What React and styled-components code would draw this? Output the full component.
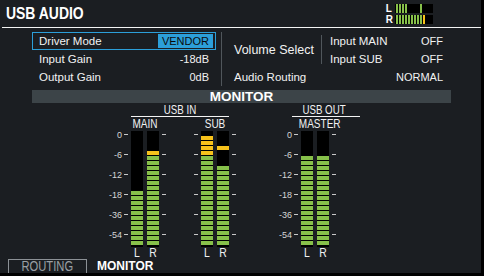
import React from "react";
import styled, { createGlobalStyle } from "styled-components";

const SANS = `"Liberation Sans", Arial, sans-serif`;
// no narrow face installed, so the condensed labels are squeezed horizontally
const SQUEEZE = 0.8;

const GREEN = "#87c04a";
const YELLOW = "#f7c21b";
const BLUE = "#2c9fd9";
const RULE = "#50565b";

const GlobalStyle = createGlobalStyle`
  * { box-sizing: border-box; }
  body { margin: 0; background: #000; }
`;

const Screen = styled.div`
  width: 481px;
  height: 273px;
  background: #1b1e22;
  color: #f2f2f2;
  font-family: ${SANS};
  display: flex;
  flex-direction: column;
  overflow: hidden;
`;

const Header = styled.header`
  height: 28px;
  margin-left: 2px;
  padding: 0 48px 0 4px;
  border-bottom: 1px solid #f4f4f4;
  display: flex;
  justify-content: space-between;
  align-items: flex-start;
`;

const Title = styled.h1`
  margin: 0;
  display: inline-block;
  font-size: 17px;
  font-weight: bold;
  line-height: 27px;
  color: #fff;
  white-space: nowrap;
  transform: scaleX(0.82);
  transform-origin: left center;
`;

const MiniMeter = styled.div`
  margin-top: 4px;
  display: grid;
  grid-template-columns: auto 38px;
  column-gap: 2px;
  row-gap: 2px;
`;

const MiniLabel = styled.span`
  font-size: 10px;
  font-weight: bold;
  line-height: 9px;
  color: #fff;
`;

const MiniBar = styled.div`
  height: 9px;
  background: #000;
  display: flex;
  gap: 1px;
  padding-left: 1px;
`;

const MiniSeg = styled.span`
  width: 2px;
  background: ${(p) => p.$c || "transparent"};
`;

const Settings = styled.section`
  height: 54px;
  margin: 4px 0 0 32px;
  display: flex;
  font-size: 11.5px;
`;

const LeftCol = styled.div`
  width: 184px;
  display: flex;
  flex-direction: column;
`;

const SettingRow = styled.div`
  height: 18px;
  padding: 0 2px 0 6px;
  border: 1px solid ${(p) => (p.$selected ? BLUE : "transparent")};
  display: flex;
  align-items: center;
  justify-content: space-between;
`;

const Value = styled.span`
  height: 14px;
  line-height: 14px;
  padding: 0 4px;
  font-size: 11px;
  background: ${(p) => (p.$selected ? BLUE : "transparent")};
  color: ${(p) => (p.$selected ? "#0b0b0b" : "#f2f2f2")};
`;

const Divider = styled.div`
  width: 1px;
  background: ${RULE};
  margin: ${(p) => p.$margin};
`;

const RightCol = styled.div`
  width: 209px;
  display: flex;
  flex-direction: column;
`;

const VolumeRow = styled.div`
  height: 36px;
  display: flex;
`;

const VolumeLabel = styled.span`
  width: 87px;
  align-self: center;
  font-size: 12.5px;
`;

const SubList = styled.div`
  flex: 1;
  padding-left: 8px;
  display: flex;
  flex-direction: column;
`;

const PlainRow = styled.div`
  height: 18px;
  display: flex;
  align-items: center;
  justify-content: space-between;
`;

const PlainValue = styled.span`
  font-size: 11px;
`;

const MonitorBar = styled.div`
  width: 419px;
  height: 13px;
  margin: 4px 0 0 32px;
  background: #3c4448;
  text-align: center;
  font-size: 13.5px;
  font-weight: bold;
  line-height: 13px;
  color: #fff;
`;

const MeterArea = styled.section`
  height: 156px;
  padding-left: 100px;
  display: flex;
  align-items: flex-start;
`;

const Scale = styled.div`
  width: 22px;
  margin: 22px 2px 0 ${(p) => p.$left || 0}px;
  display: grid;
  grid-auto-rows: 20px;
  text-align: right;
  font-size: 9px;
  line-height: 20px;
  color: #d6d6d6;
`;

const Group = styled.div`
  display: flex;
  flex-direction: column;
`;

const GroupTitle = styled.div`
  height: 13px;
  line-height: 13px;
  text-align: center;
  font-size: 13.5px;
  white-space: nowrap;
  transform: scaleX(0.72);
`;

const Rule = styled.div`
  height: 1px;
  background: #f4f4f4;
  margin: 0 ${(p) => p.$r}px 0 ${(p) => p.$l}px;
`;

const Pairs = styled.div`
  display: flex;
  gap: 28px;
`;

const Pair = styled.div`
  display: grid;
  grid-template-columns: 7px 28px 7px;
  grid-template-rows: 14px 116px 11px;
`;

const PairName = styled.div`
  grid-column: 1 / -1;
  text-align: center;
  font-size: 13px;
  line-height: 14px;
  white-space: nowrap;
  transform: scaleX(0.77);
`;

const Ticks = styled.div`
  display: flex;
  flex-direction: column;
  align-items: ${(p) => (p.$right ? "flex-end" : "flex-start")};
  gap: 19px;
  padding-top: 3px;
`;

const Tick = styled.span`
  width: 4px;
  height: 1px;
  background: #c8c8c8;
`;

const Bars = styled.div`
  display: flex;
  gap: 4px;
`;

const Bar = styled.div`
  width: 12px;
  height: 116px;
  padding-bottom: 2px;
  background: #000;
  display: flex;
  flex-direction: column;
  gap: 1px;
`;

const Seg = styled.span`
  height: 4px;
  background: ${(p) => p.$c || "transparent"};
`;

const Channels = styled.div`
  grid-column: 2;
  display: grid;
  grid-template-columns: 12px 12px;
  column-gap: 4px;
  text-align: center;
  font-size: 13px;
  line-height: 11px;
`;

const Squeezed = styled.span`
  display: inline-block;
  white-space: nowrap;
  transform: scaleX(${SQUEEZE});
`;

const Tabs = styled.nav`
  height: 14px;
  padding-left: 8px;
  display: flex;
  align-items: stretch;
`;

const Tab = styled.div`
  width: ${(p) => (p.$active ? "auto" : "79px")};
  margin-left: ${(p) => (p.$active ? "10px" : "0")};
  border: ${(p) => (p.$active ? "none" : "1px solid #8c9196")};
  border-bottom: none;
  text-align: center;
  font-size: ${(p) => (p.$active ? "12px" : "14px")};
  font-weight: ${(p) => (p.$active ? "bold" : "normal")};
  line-height: ${(p) => (p.$active ? "14px" : "13px")};
  color: ${(p) => (p.$active ? "#fff" : "#9aa0a5")};
`;

const SCALE = ["0", "-6", "-12", "-18", "-36", "-54"];
const SEGMENTS = 23;

function segColor(i, from, peak) {
  if (i >= from || i === peak) return i <= 4 ? YELLOW : GREEN;
  return null;
}

function MeterBar({ from, peak }) {
  return (
    <Bar>
      {Array.from({ length: SEGMENTS }, (_, i) => (
        <Seg key={i} $c={segColor(i, from, peak)} />
      ))}
    </Bar>
  );
}

function TickColumn({ right }) {
  return (
    <Ticks $right={right}>
      {SCALE.map((s) => (
        <Tick key={s} />
      ))}
    </Ticks>
  );
}

function MeterPair({ name, left, right }) {
  return (
    <Pair>
      <PairName>{name}</PairName>
      <TickColumn />
      <Bars>
        <MeterBar {...left} />
        <MeterBar {...right} />
      </Bars>
      <TickColumn right />
      <Channels>
        <Squeezed>L</Squeezed>
        <Squeezed>R</Squeezed>
      </Channels>
    </Pair>
  );
}

function ScaleLabels({ left }) {
  return (
    <Scale $left={left}>
      {SCALE.map((s) => (
        <span key={s}>{s}</span>
      ))}
    </Scale>
  );
}

function Mini({ lit, peak }) {
  return (
    <MiniBar>
      {Array.from({ length: 12 }, (_, i) => {
        let c = null;
        if (i < lit) c = GREEN;
        if (i === peak) c = i >= 9 ? YELLOW : GREEN;
        return <MiniSeg key={i} $c={c} />;
      })}
    </MiniBar>
  );
}

export default function App() {
  return (
    <>
      <GlobalStyle />
      <Screen>
        <Header>
          <Title>USB AUDIO</Title>
          <MiniMeter>
            <MiniLabel>L</MiniLabel>
            <Mini lit={4} peak={8} />
            <MiniLabel>R</MiniLabel>
            <Mini lit={9} peak={9} />
          </MiniMeter>
        </Header>

        <Settings>
          <LeftCol>
            <SettingRow $selected>
              <span>Driver Mode</span>
              <Value $selected>VENDOR</Value>
            </SettingRow>
            <SettingRow>
              <span>Input Gain</span>
              <Value>-18dB</Value>
            </SettingRow>
            <SettingRow>
              <span>Output Gain</span>
              <Value>0dB</Value>
            </SettingRow>
          </LeftCol>
          <Divider $margin="0 12px 0 5px" />
          <RightCol>
            <VolumeRow>
              <VolumeLabel>Volume Select</VolumeLabel>
              <Divider $margin="3px 0 4px" />
              <SubList>
                <PlainRow>
                  <span>Input MAIN</span>
                  <PlainValue>OFF</PlainValue>
                </PlainRow>
                <PlainRow>
                  <span>Input SUB</span>
                  <PlainValue>OFF</PlainValue>
                </PlainRow>
              </SubList>
            </VolumeRow>
            <PlainRow>
              <span>Audio Routing</span>
              <PlainValue>NORMAL</PlainValue>
            </PlainRow>
          </RightCol>
        </Settings>

        <MonitorBar>MONITOR</MonitorBar>

        <MeterArea>
          <ScaleLabels />
          <Group>
            <GroupTitle>USB IN</GroupTitle>
            <Rule $l={7} $r={7} />
            <Pairs>
              <MeterPair name="MAIN" left={{ from: 12 }} right={{ from: 4 }} />
              <MeterPair name="SUB" left={{ from: 1 }} right={{ from: 7, peak: 3 }} />
            </Pairs>
          </Group>
          <ScaleLabels left={34} />
          <Group>
            <GroupTitle>USB OUT</GroupTitle>
            <Rule $l={-2} $r={-6} />
            <Pairs>
              <MeterPair name="MASTER" left={{ from: 5 }} right={{ from: 5 }} />
            </Pairs>
          </Group>
        </MeterArea>

        <Tabs>
          <Tab>
            <Squeezed>ROUTING</Squeezed>
          </Tab>
          <Tab $active>MONITOR</Tab>
        </Tabs>
      </Screen>
    </>
  );
}
